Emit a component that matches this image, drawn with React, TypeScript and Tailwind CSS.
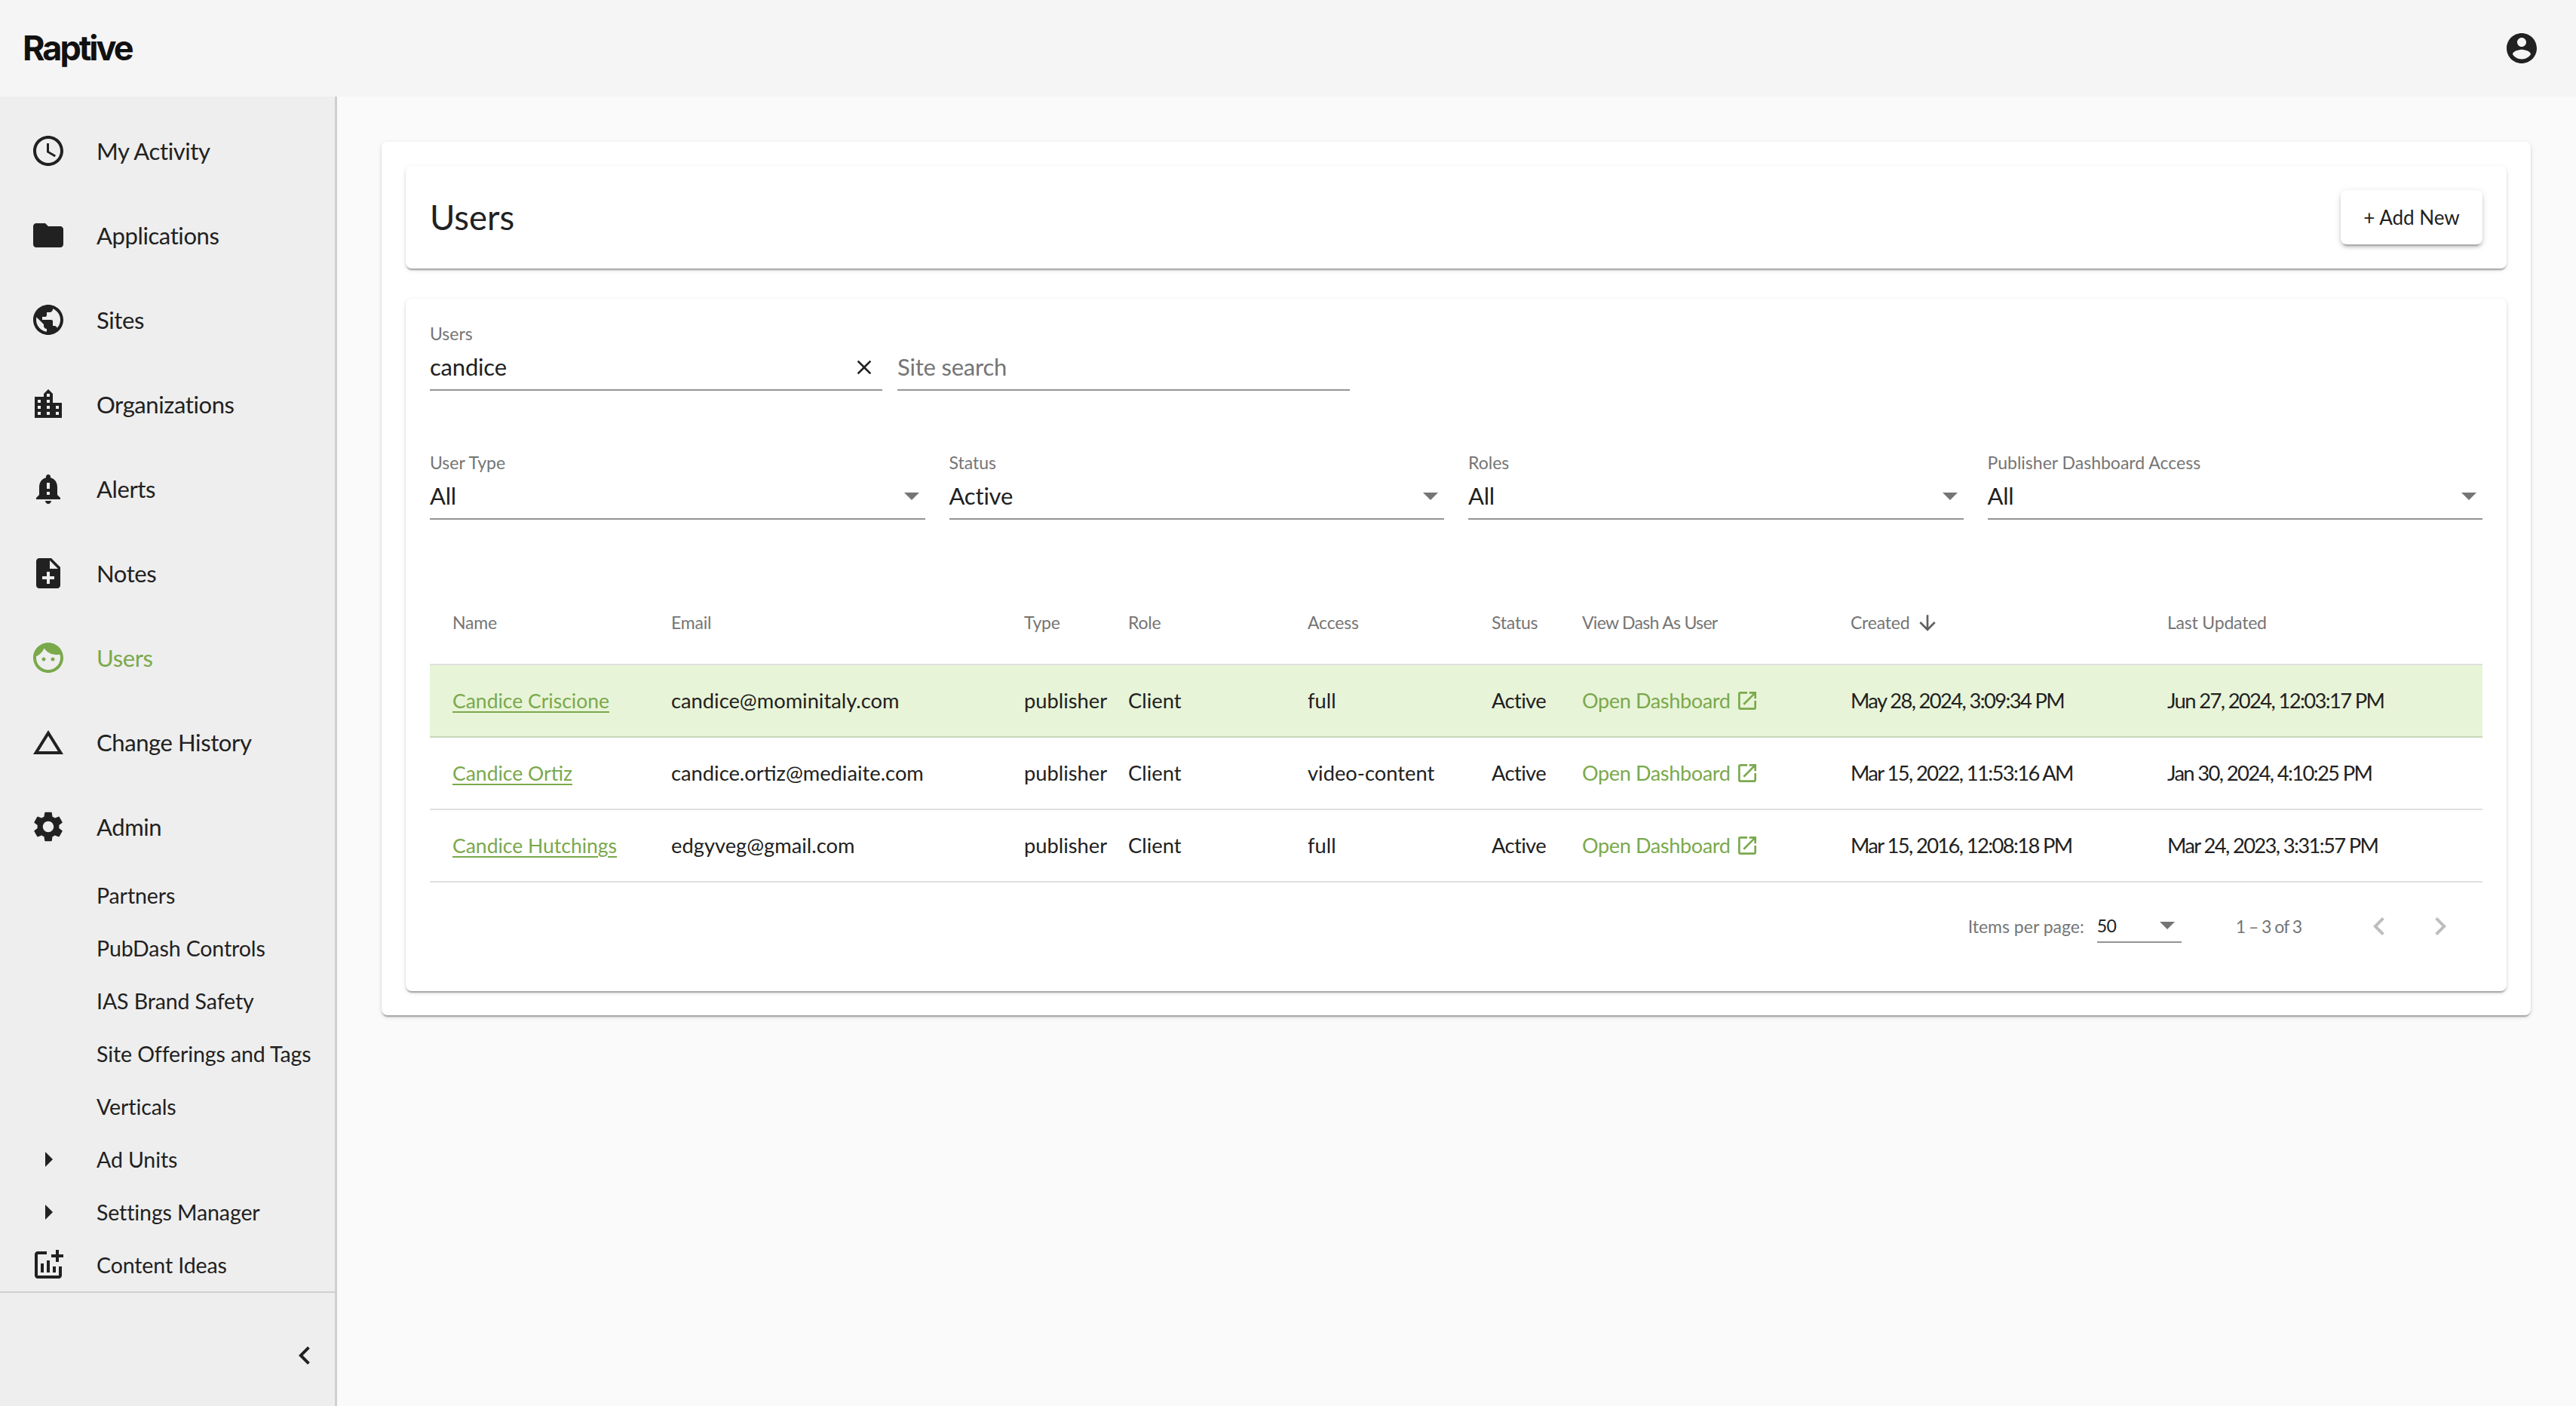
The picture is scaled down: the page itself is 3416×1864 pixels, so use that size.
import type { ReactNode } from "react";

const ICONS = {
  clock: "M11.99 2C6.47 2 2 6.48 2 12s4.47 10 9.99 10C17.52 22 22 17.52 22 12S17.52 2 11.99 2zM12 20c-4.42 0-8-3.58-8-8s3.58-8 8-8 8 3.58 8 8-3.58 8-8 8zm.5-13H11v6l5.25 3.15.75-1.23-4.5-2.67z",
  folder: "M10 4H4c-1.1 0-1.99.9-1.99 2L2 18c0 1.1.9 2 2 2h16c1.1 0 2-.9 2-2V8c0-1.1-.9-2-2-2h-8l-2-2z",
  globe: "M12 2C6.48 2 2 6.48 2 12s4.48 10 10 10 10-4.48 10-10S17.52 2 12 2zm-1 17.93c-3.95-.49-7-3.85-7-7.93 0-.62.08-1.21.21-1.79L9 15v1c0 1.1.9 2 2 2v1.93zm6.9-2.54c-.26-.81-1-1.39-1.9-1.39h-1v-3c0-.55-.45-1-1-1H8v-2h2c.55 0 1-.45 1-1V7h2c1.1 0 2-.9 2-2v-.41c2.93 1.19 5 4.06 5 7.41 0 2.08-.8 3.97-2.1 5.39z",
  city: "M15 11V5l-3-3-3 3v2H3v14h18V11h-6zm-8 8H5v-2h2v2zm0-4H5v-2h2v2zm0-4H5V9h2v2zm6 8h-2v-2h2v2zm0-4h-2v-2h2v2zm0-4h-2V9h2v2zm0-4h-2V5h2v2zm6 12h-2v-2h2v2zm0-4h-2v-2h2v2z",
  bell: "M12 22c1.1 0 2-.9 2-2h-4c0 1.1.9 2 2 2zm6-6v-5c0-3.07-1.63-5.64-4.5-6.32V4c0-.83-.67-1.5-1.5-1.5s-1.5.67-1.5 1.5v.68C7.64 5.36 6 7.92 6 11v5l-2 2v1h16v-1l-2-2zm-5 0h-2v-2h2v2zm0-4h-2V8h2v4z",
  note: "M14 2H6c-1.1 0-1.99.9-1.99 2L4 20c0 1.1.89 2 1.99 2H18c1.1 0 2-.9 2-2V8l-6-6zm2 14h-3v3h-2v-3H8v-2h3v-3h2v3h3v2zm-3-7V3.5L18.5 9H13z",
  face: "M9 11.75c-.69 0-1.25.56-1.25 1.25s.56 1.25 1.25 1.25 1.25-.56 1.25-1.25-.56-1.25-1.25-1.25zm6 0c-.69 0-1.25.56-1.25 1.25s.56 1.25 1.25 1.25 1.25-.56 1.25-1.25-.56-1.25-1.25-1.25zM12 2C6.48 2 2 6.48 2 12s4.48 10 10 10 10-4.48 10-10S17.52 2 12 2zm0 18c-4.41 0-8-3.59-8-8 0-.29.02-.58.05-.86 2.36-1.05 4.23-2.98 5.21-5.37C11.07 8.33 14.05 10 17.42 10c.78 0 1.53-.09 2.25-.26.21.71.33 1.47.33 2.26 0 4.41-3.59 8-8 8z",
  delta: "M12 7.77L18.39 18H5.61L12 7.77M12 4L2 20h20L12 4z",
  gear: "M19.14 12.94c.04-.3.06-.61.06-.94 0-.32-.02-.64-.07-.94l2.03-1.58c.18-.14.23-.41.12-.61l-1.92-3.32c-.12-.22-.37-.29-.59-.22l-2.39.96c-.5-.38-1.03-.7-1.62-.94l-.36-2.54c-.04-.24-.24-.41-.48-.41h-3.84c-.24 0-.43.17-.47.41l-.36 2.54c-.59.24-1.13.57-1.62.94l-2.39-.96c-.22-.08-.47 0-.59.22L2.74 8.87c-.12.21-.08.47.12.61l2.03 1.58c-.05.3-.09.63-.09.94s.02.64.07.94l-2.03 1.58c-.18.14-.23.41-.12.61l1.92 3.32c.12.22.37.29.59.22l2.39-.96c.5.38 1.03.7 1.62.94l.36 2.54c.05.24.24.41.48.41h3.84c.24 0 .44-.17.47-.41l.36-2.54c.59-.24 1.13-.56 1.62-.94l2.39.96c.22.08.47 0 .59-.22l1.92-3.32c.12-.22.07-.47-.12-.61l-2.01-1.58zM12 15.6c-1.98 0-3.6-1.62-3.6-3.6s1.62-3.6 3.6-3.6 3.6 1.62 3.6 3.6-1.62 3.6-3.6 3.6z",
  caret: "M10 7l5 5-5 5z",
  chart: "M22 5v2h-3v3h-2V7h-3V5h3V2h2v3h3zm-3 14H5V5h6V3H5c-1.1 0-2 .9-2 2v14c0 1.1.9 2 2 2h14c1.1 0 2-.9 2-2v-6h-2v6zm-4-6v4h2v-4h-2zm-4 4h2V9h-2v8zm-2 0v-6H7v6h2z",
  close: "M19 6.41L17.59 5 12 10.59 6.41 5 5 6.41 10.59 12 5 17.59 6.41 19 12 13.41 17.59 19 19 17.59 13.41 12z",
  open: "M19 19H5V5h7V3H5c-1.11 0-2 .9-2 2v14c0 1.1.89 2 2 2h14c1.1 0 2-.9 2-2v-7h-2v7zM14 3v2h3.59l-9.83 9.83 1.41 1.41L19 6.41V10h2V3h-7z",
  down: "M20 12l-1.41-1.41L13 16.17V4h-2v12.17l-5.58-5.59L4 12l8 8 8-8z",
  prev: "M15.41 7.41L14 6l-6 6 6 6 1.41-1.41L10.83 12z",
  next: "M10 6L8.59 7.41 13.17 12l-4.58 4.59L10 18l6-6z",
  account: "M12 2C6.48 2 2 6.48 2 12s4.48 10 10 10 10-4.48 10-10S17.52 2 12 2zm0 3c1.66 0 3 1.34 3 3s-1.34 3-3 3-3-1.34-3-3 1.34-3 3-3zm0 14.2c-2.5 0-4.71-1.28-6-3.22.03-1.99 4-3.08 6-3.08 1.99 0 5.97 1.09 6 3.08-1.29 1.94-3.5 3.22-6 3.22z",
};

function Icon({ name, className }: { name: keyof typeof ICONS; className?: string }) {
  return (
    <svg viewBox="0 0 24 24" fill="currentColor" className={className}>
      <path d={ICONS[name]} />
    </svg>
  );
}

function NavItem({ icon, label, active }: { icon: keyof typeof ICONS; label: string; active?: boolean }) {
  return (
    <div className={`flex h-[112px] items-center text-[31px] tracking-[-0.4px] ${active ? "text-[#7aa94c]" : "text-[#212121]"}`}>
      <div className="flex w-[128px] shrink-0 pl-[40px]">
        <Icon name={icon} className="h-12 w-12" />
      </div>
      {label}
    </div>
  );
}

function SubItem({ icon, label }: { icon?: keyof typeof ICONS; label: string }) {
  return (
    <div className="flex h-[70px] items-center text-[28.5px] tracking-[-0.1px] text-[#212121]">
      <div className="flex w-[128px] shrink-0 pl-[40px]">
        {icon && <Icon name={icon} className="h-12 w-12" />}
      </div>
      {label}
    </div>
  );
}

function Field({ label, value, placeholder, trailing }: { label?: string; value?: string; placeholder?: string; trailing?: ReactNode }) {
  return (
    <div>
      <div className="flex h-[30px] items-center text-[23px] text-[#757575]">{label}</div>
      <div className="flex h-[61px] items-center justify-between border-b-2 border-[#949494] text-[31px] tracking-[-0.2px]">
        {value ? <span className="text-[#212121]">{value}</span> : <span className="text-[#757575]">{placeholder}</span>}
        {trailing}
      </div>
    </div>
  );
}

function Arrow() {
  return <div className="h-0 w-0 border-x-[10px] border-t-[10px] border-x-transparent border-t-[#757575]" />;
}

function SelectField({ label, value }: { label: string; value: string }) {
  return <Field label={label} value={value} trailing={<div className="mr-[8px]"><Arrow /></div>} />;
}

const USERS = [
  { name: "Candice Criscione", email: "candice@mominitaly.com", access: "full", created: "May 28, 2024, 3:09:34 PM", updated: "Jun 27, 2024, 12:03:17 PM" },
  { name: "Candice Ortiz", email: "candice.ortiz@mediaite.com", access: "video-content", created: "Mar 15, 2022, 11:53:16 AM", updated: "Jan 30, 2024, 4:10:25 PM" },
  { name: "Candice Hutchings", email: "edgyveg@gmail.com", access: "full", created: "Mar 15, 2016, 12:08:18 PM", updated: "Mar 24, 2023, 3:31:57 PM" },
];

const CARD_SHADOW = "shadow-[0_4px_2px_-2px_rgba(0,0,0,0.2),0_2px_2px_0_rgba(0,0,0,0.14),0_2px_6px_0_rgba(0,0,0,0.12)]";

export default function App() {
  return (
    <div className="flex h-screen flex-col overflow-hidden bg-[#fafafa] font-['Lato',sans-serif] text-[#212121]">
      <header className="flex h-[128px] shrink-0 items-center justify-between bg-[#f5f5f5] pl-[30px] pr-[48px]">
        <span className="font-['Inter',sans-serif] text-[45px] font-bold tracking-[-3px] text-[#111111]">Raptive</span>
        <Icon name="account" className="h-12 w-12" />
      </header>
      <div className="flex min-h-0 flex-1">
        <aside className="flex w-[447px] shrink-0 flex-col border-r-[3px] border-[#cfcfcf] bg-[#eeeeee]">
          <nav className="pt-4">
            <NavItem icon="clock" label="My Activity" />
            <NavItem icon="folder" label="Applications" />
            <NavItem icon="globe" label="Sites" />
            <NavItem icon="city" label="Organizations" />
            <NavItem icon="bell" label="Alerts" />
            <NavItem icon="note" label="Notes" />
            <NavItem icon="face" label="Users" active />
            <NavItem icon="delta" label="Change History" />
            <NavItem icon="gear" label="Admin" />
            <SubItem label="Partners" />
            <SubItem label="PubDash Controls" />
            <SubItem label="IAS Brand Safety" />
            <SubItem label="Site Offerings and Tags" />
            <SubItem label="Verticals" />
            <SubItem icon="caret" label="Ad Units" />
            <SubItem icon="caret" label="Settings Manager" />
            <SubItem icon="chart" label="Content Ideas" />
          </nav>
          <div className="flex flex-1 items-center justify-end border-t-[2px] border-[#cfcfcf] pr-[16px] pt-[16px]">
            <Icon name="prev" className="h-12 w-12" />
          </div>
        </aside>
        <main className="min-w-0 flex-1 pl-[59px] pr-[60px] pt-[60px]">
          <div className={`rounded-lg bg-white p-[32px] ${CARD_SHADOW}`}>
            <div className={`flex h-[136px] items-center justify-between rounded-lg bg-white px-[32px] ${CARD_SHADOW}`}>
              <h1 className="text-[45.5px] font-normal">Users</h1>
              <button
                type="button"
                className="flex h-[72px] w-[188px] items-center justify-center rounded-lg bg-white text-[26px] shadow-[0_6px_2px_-4px_rgba(0,0,0,0.2),0_4px_4px_0_rgba(0,0,0,0.14),0_2px_10px_0_rgba(0,0,0,0.12)]"
              >
                + Add New
              </button>
            </div>
            <div className={`mt-[40px] rounded-lg bg-white px-[32px] pb-[28px] pt-[31px] ${CARD_SHADOW}`}>
              <div className="flex gap-[20px]">
                <div className="w-[600px]">
                  <Field label="Users" value="candice" trailing={<Icon name="close" className="mr-[8px] h-8 w-8 text-[#212121]" />} />
                </div>
                <div className="w-[600px]">
                  <Field placeholder="Site search" />
                </div>
              </div>
              <div className="mt-[80px] grid grid-cols-4 gap-x-[32px]">
                <SelectField label="User Type" value="All" />
                <SelectField label="Status" value="Active" />
                <SelectField label="Roles" value="All" />
                <SelectField label="Publisher Dashboard Access" value="All" />
              </div>
              <table className="mt-[82px] w-full table-fixed border-collapse">
                <thead>
                  <tr className="h-[110px] border-b-2 border-[#e0e0e0] text-left text-[23px] tracking-[-0.2px] text-[#757575]">
                    <th className="w-[320px] pl-[30px] font-normal">Name</th>
                    <th className="w-[468px] font-normal">Email</th>
                    <th className="w-[138px] font-normal">Type</th>
                    <th className="w-[238px] font-normal">Role</th>
                    <th className="w-[244px] font-normal">Access</th>
                    <th className="w-[120px] font-normal">Status</th>
                    <th className="w-[356px] font-normal tracking-[-0.7px]">View Dash As User</th>
                    <th className="w-[420px] font-normal">
                      <span className="flex items-center gap-[8px]">
                        Created
                        <Icon name="down" className="h-8 w-8 text-[#616161]" />
                      </span>
                    </th>
                    <th className="font-normal">Last Updated</th>
                  </tr>
                </thead>
                <tbody>
                  {USERS.map((user, i) => (
                    <tr key={user.name} className={`h-[96px] border-b-2 text-[27.3px] ${i === 0 ? "border-[#c9d8b8] bg-[#e8f4d8]" : "border-[#e0e0e0]"}`}>
                      <td className="pl-[30px]">
                        <a className="text-[26.5px] text-[#7aa94c] underline underline-offset-[4px]">{user.name}</a>
                      </td>
                      <td>{user.email}</td>
                      <td>publisher</td>
                      <td>Client</td>
                      <td>{user.access}</td>
                      <td className="tracking-[-0.6px]">Active</td>
                      <td>
                        <span className="flex items-center gap-[7px] text-[27px] tracking-[-0.35px] text-[#7aa94c]">
                          Open Dashboard
                          <Icon name="open" className="h-8 w-8" />
                        </span>
                      </td>
                      <td className="tracking-[-1.6px]">{user.created}</td>
                      <td className="tracking-[-1.6px]">{user.updated}</td>
                    </tr>
                  ))}
                </tbody>
              </table>
              <div className="flex h-[116px] items-center justify-end pr-[32px] text-[23px] text-[#757575]">
                <span>Items per page:</span>
                <div className="ml-[17px] flex h-[44px] w-[112px] items-center justify-between border-b-2 border-[#949494] pr-[9px] text-[#212121]">
                  <span className="tracking-[-0.6px]">50</span>
                  <Arrow />
                </div>
                <span className="ml-[72px] tracking-[-1px]">1 – 3 of 3</span>
                <Icon name="prev" className="ml-[79px] h-12 w-12 text-[#bdbdbd]" />
                <Icon name="next" className="ml-[33px] h-12 w-12 text-[#bdbdbd]" />
              </div>
            </div>
          </div>
        </main>
      </div>
    </div>
  );
}
